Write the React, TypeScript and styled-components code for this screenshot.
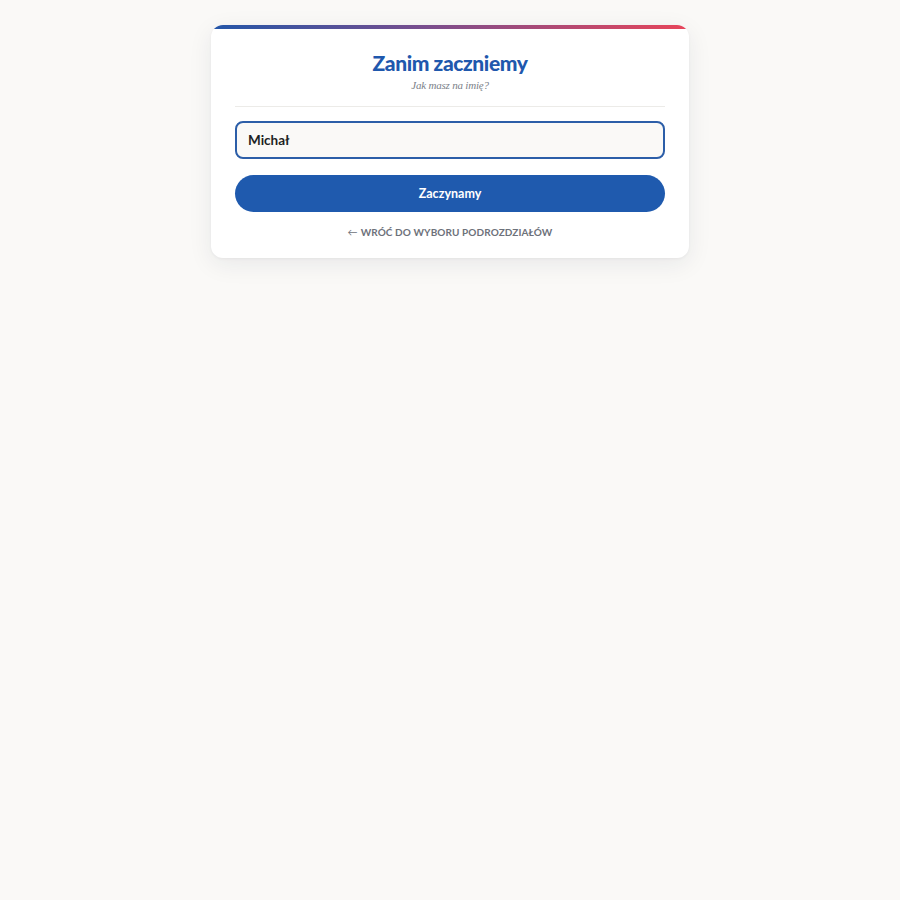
import React from "react";
import styled, { createGlobalStyle } from "styled-components";

const Global = createGlobalStyle`
  html, body { margin: 0; padding: 0; background: #faf9f7; }
  body { font-family: "Lato", "Liberation Sans", sans-serif; }
`;

const Page = styled.div`
  min-height: 900px;
  display: flex;
  justify-content: center;
  align-items: flex-start;
  padding-top: 25px;
  box-sizing: border-box;
`;

const Card = styled.div`
  width: 478px;
  background: #ffffff;
  border-radius: 12px;
  overflow: hidden;
  box-shadow: 0 6px 24px rgba(30, 40, 60, 0.08), 0 1px 3px rgba(30, 40, 60, 0.05);
  display: flex;
  flex-direction: column;
`;

const TopBar = styled.div`
  height: 4px;
  background: linear-gradient(90deg, #2356a8 0%, #7a4e8e 45%, #e8455a 100%);
`;

const Body = styled.div`
  padding: 21px 24px 19px;
  display: flex;
  flex-direction: column;
`;

const Header = styled.div`
  display: flex;
  flex-direction: column;
  align-items: center;
  padding-bottom: 13px;
  border-bottom: 1px solid #ecebe8;
`;

const Title = styled.h1`
  margin: 0;
  font-family: "Lato", sans-serif;
  font-weight: 900;
  font-size: 21px;
  letter-spacing: -0.4px;
  color: #1f58ad;
  line-height: 26px;
`;

const Subtitle = styled.p`
  margin: 2px 0 0;
  font-family: "Liberation Serif", serif;
  font-style: italic;
  font-size: 11px;
  letter-spacing: -0.2px;
  color: #7b7f89;
  line-height: 15px;
`;

const Input = styled.input`
  margin-top: 14px;
  height: 38px;
  box-sizing: border-box;
  border: 2px solid #2c5ea8;
  border-radius: 8px;
  background: #faf9f7;
  padding: 0 11px;
  font-family: "Lato", sans-serif;
  font-weight: 700;
  font-size: 13.5px;
  color: #1d1f24;
  outline: none;
`;

const Button = styled.button`
  margin-top: 16px;
  height: 37px;
  border: none;
  border-radius: 19px;
  background: #1f5aae;
  color: #ffffff;
  font-family: "Lato", sans-serif;
  font-weight: 700;
  font-size: 12.5px;
  cursor: pointer;
`;

const BackLink = styled.a`
  margin-top: 13px;
  align-self: center;
  font-family: "Lato", sans-serif;
  font-weight: 700;
  font-size: 10px;
  letter-spacing: 0.1px;
  text-transform: uppercase;
  color: #6d717a;
  text-decoration: none;
  line-height: 14px;
`;

const Arrow = styled.span`
  font-weight: 400;
  margin-right: 3px;
`;

export default function App() {
  return (
    <>
      <Global />
      <Page>
        <Card>
          <TopBar />
          <Body>
            <Header>
              <Title>Zanim zaczniemy</Title>
              <Subtitle>Jak masz na imię?</Subtitle>
            </Header>
            <Input defaultValue="Michał" />
            <Button>Zaczynamy</Button>
            <BackLink href="#">
              <Arrow>←</Arrow>Wróć do wyboru podrozdziałów
            </BackLink>
          </Body>
        </Card>
      </Page>
    </>
  );
}
